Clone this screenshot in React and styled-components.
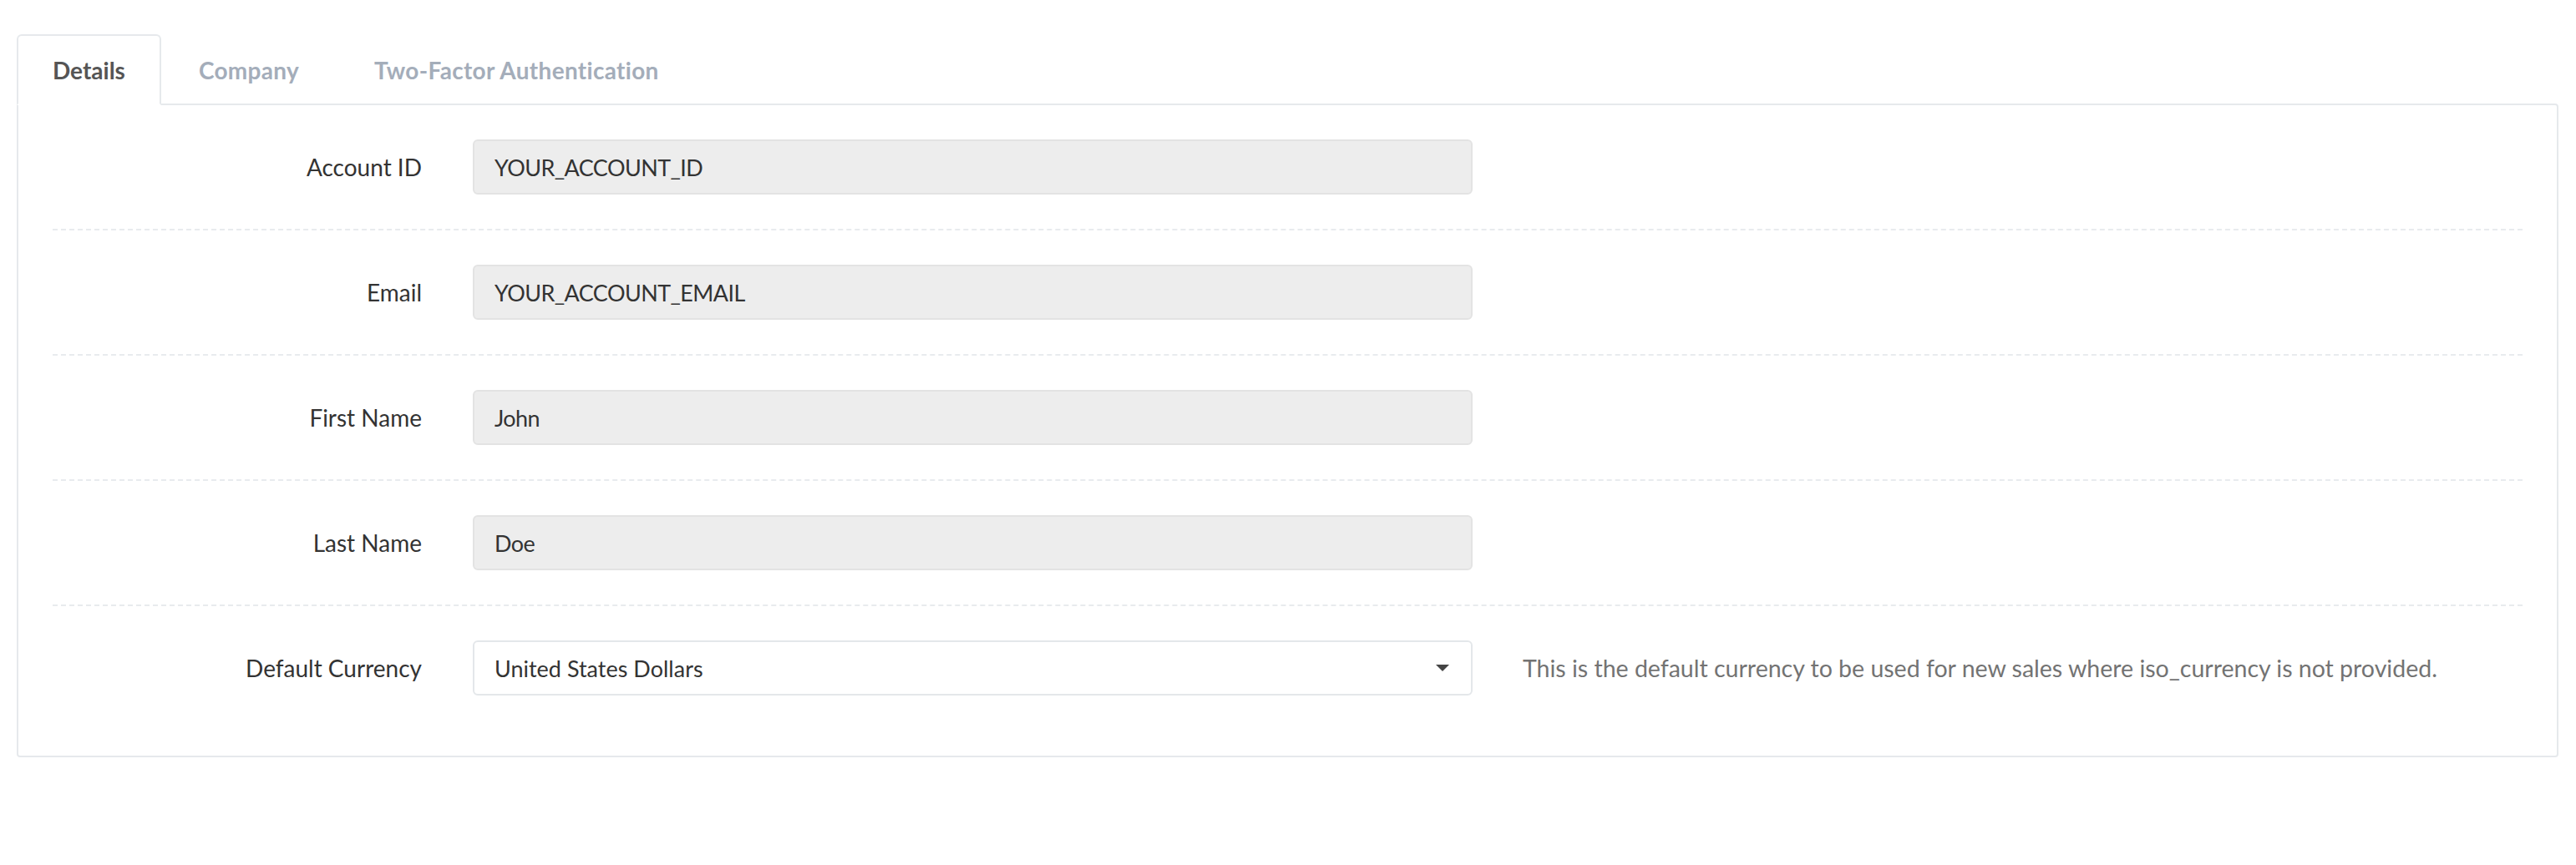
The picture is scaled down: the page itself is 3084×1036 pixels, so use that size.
import React from "react";
import styled, { createGlobalStyle } from "styled-components";

const GlobalStyle = createGlobalStyle`
  body {
    margin: 0;
    background: #fff;
    font-family: Lato, Roboto, "Liberation Sans", sans-serif;
    color: #333;
  }
`;

// STYLES
const Page = styled.div`
  padding: 41px 21px 0 20px;
`;

const TabList = styled.ul`
  display: flex;
  margin: 0;
  padding: 0;
  list-style: none;
  position: relative;
  z-index: 1;
`;

const Tab = styled.li`
  height: 81px;
  padding: 0 ${(props) => (props.active ? "41px" : "43px")};
  display: flex;
  align-items: center;
  font-size: 28px;
  font-weight: 700;
  letter-spacing: ${(props) => (props.active ? "0" : "0.3px")};
  color: ${(props) => (props.active ? "#555" : "#a4adba")};
  background: ${(props) => (props.active ? "#fff" : "transparent")};
  border: 2px solid ${(props) => (props.active ? "#e6e9ec" : "transparent")};
  border-bottom-color: ${(props) => (props.active ? "#fff" : "transparent")};
  border-radius: 6px 6px 0 0;
  margin-bottom: -2px;
  cursor: pointer;
`;

const Panel = styled.div`
  border: 2px solid #e6e9ec;
  border-radius: 0 4px 4px 4px;
  padding: 0 41px 31px;
`;

const Row = styled.div`
  display: grid;
  grid-template-columns: 443px 1197px auto;
  column-gap: 60px;
  align-items: center;
  padding: 41px 0;
  border-bottom: 2px dashed #e8ebee;

  &:last-child {
    border-bottom: none;
  }
`;

const Label = styled.label`
  text-align: right;
  font-size: 28px;
  color: #333;
  padding-right: 1px;
`;

const Input = styled.input`
  box-sizing: border-box;
  height: 66px;
  width: 100%;
  padding: 0 24px;
  font-family: inherit;
  font-size: 27px;
  letter-spacing: -0.6px;
  color: #333;
  background: #ededed;
  border: 2px solid #e3e3e3;
  border-radius: 6px;
  outline: none;
`;

const SelectBox = styled.div`
  box-sizing: border-box;
  height: 66px;
  padding: 0 24px;
  display: flex;
  align-items: center;
  justify-content: space-between;
  font-size: 27px;
  color: #333;
  background: #fff;
  border: 2px solid #e4e7ea;
  border-radius: 6px;
`;

const Caret = styled.span`
  width: 0;
  height: 0;
  border-left: 8px solid transparent;
  border-right: 8px solid transparent;
  border-top: 8px solid #444;
  margin-right: 2px;
`;

const Help = styled.p`
  margin: 0;
  font-size: 28.5px;
  color: #737373;
  white-space: nowrap;
`;

const fields = [
  { label: "Account ID", value: "YOUR_ACCOUNT_ID" },
  { label: "Email", value: "YOUR_ACCOUNT_EMAIL" },
  { label: "First Name", value: "John" },
  { label: "Last Name", value: "Doe" },
];

const App = () => {
  return (
    <Page>
      <GlobalStyle />
      <TabList>
        <Tab active>Details</Tab>
        <Tab>Company</Tab>
        <Tab>Two-Factor Authentication</Tab>
      </TabList>
      <Panel>
        {fields.map((f) => (
          <Row key={f.label}>
            <Label>{f.label}</Label>
            <Input readOnly value={f.value} />
            <span />
          </Row>
        ))}
        <Row>
          <Label>Default Currency</Label>
          <SelectBox>
            <span>United States Dollars</span>
            <Caret />
          </SelectBox>
          <Help>
            This is the default currency to be used for new sales where iso_currency is not provided.
          </Help>
        </Row>
      </Panel>
    </Page>
  );
};

export default App;
